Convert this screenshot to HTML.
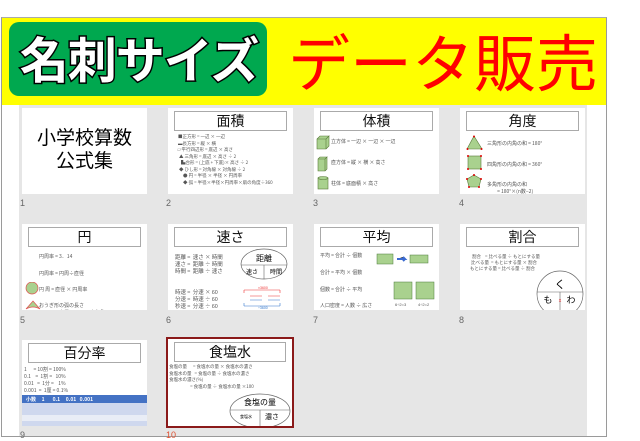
<!DOCTYPE html>
<html><head><meta charset="utf-8">
<style>
*{margin:0;padding:0;box-sizing:border-box}
body{width:640px;height:441px;background:#fff;position:relative;overflow:hidden;font-family:"Liberation Sans","Noto Sans CJK JP",sans-serif}
.abs{position:absolute}
#frame{left:1px;top:17px;width:606px;height:420px;border:1px solid #9a9a9a;border-top:1px solid #aaa}
#yellow{left:2px;top:18px;width:604px;height:87px;background:#ffff00}
#green{left:9px;top:22px;width:258px;height:74px;background:#00a84f;border-radius:10px}
#g1{left:14px;top:25px;width:250px;text-align:center;font-size:49px;font-weight:bold;color:#fff;-webkit-text-stroke:3px #000;paint-order:stroke fill;font-family:"Noto Sans CJK JP",sans-serif;letter-spacing:-1px;line-height:66px}
#r1{left:278px;top:16px;width:330px;text-align:center;font-size:62px;color:#ff0000;line-height:86px;font-family:"Noto Sans CJK JP",sans-serif;letter-spacing:0px}
#gray{left:19px;top:105px;width:568px;height:331px;background:#e6e6e6}
.card{position:absolute;width:125px;height:86px;background:#fff;overflow:hidden}
.t{position:absolute;left:6px;top:3px;width:113px;height:20px;border:1px solid #aaa;text-align:center;font-size:14px;line-height:18px;color:#111;font-family:"Noto Sans CJK JP",sans-serif}
.s{position:absolute;font-size:5px;color:#555;white-space:pre;line-height:7px;font-family:"Noto Sans CJK JP",sans-serif}
.n{position:absolute;font-size:9px;color:#666}
</style></head><body>
<div class="abs" id="frame"></div>
<div class="abs" id="yellow"></div>
<div class="abs" id="green"></div>
<div class="abs" id="g1">名刺サイズ</div>
<div class="abs" id="r1">データ販売</div>
<div class="abs" id="gray"></div>

<div class="card" style="left:22px;top:108px">
 <div class="abs" style="left:0;top:17px;width:125px;text-align:center;font-size:19px;line-height:23px;color:#000;font-family:'Noto Sans CJK JP',sans-serif">小学校算数<br>公式集</div>
</div>
<div class="card" style="left:168px;top:108px">
 <div class="t">面積</div>
 <div class="s" style="left:8px;top:26px;font-size:4.5px;line-height:6.5px">  ■正方形 = 一辺 × 一辺
  ▬長方形 = 縦 × 横
 ▱平行四辺形 = 底辺 × 高さ
   ▲ 三角形 = 底辺 × 高さ ÷ 2
     ▙台形 = (上底 + 下底)× 高さ ÷ 2
   ◆ ひし形 = 対角線 × 対角線 ÷ 2
       ● 円 = 半径 × 半径 × 円周率
       ◆ 弧 = 半径×半径×円周率×扇の角度÷360</div>
</div>
<div class="card" style="left:314px;top:108px">
 <div class="t">体積</div>
 <svg class="abs" style="left:2px;top:27px" width="14" height="56"><g fill="#a9d18e" stroke="#5a7a3a" stroke-width=".6"><path d="M1 4h9v10H1zM1 4l3-3h9l-3 3M10 4l3-3v10l-3 3"/><path d="M2 24h7v12H2zM2 24l2-2h7l-2 2M9 24l2-2v12l-2 2"/><rect x="2" y="43" width="10" height="11"/><ellipse cx="7" cy="43" rx="5" ry="1.5"/></g></svg>
 <div class="s" style="left:17px;top:30px">立方体 = 一辺 × 一辺 × 一辺</div>
 <div class="s" style="left:17px;top:51px">直方体 = 縦 × 横 × 高さ</div>
 <div class="s" style="left:17px;top:72px">柱体 = 底面積 × 高さ</div>
</div>
<div class="card" style="left:460px;top:108px">
 <div class="t">角度</div>
 <svg class="abs" style="left:6px;top:27px" width="18" height="58"><g fill="#a9d18e" stroke="#5a7a3a" stroke-width=".6"><path d="M8 1L16 14H1z"/><rect x="2" y="21" width="13" height="13"/><path d="M8 40l7 4-2 8H3l-2-8z"/></g><g fill="#d00"><circle cx="8" cy="1.5" r="1"/><circle cx="1.5" cy="14" r="1"/><circle cx="15.5" cy="14" r="1"/><circle cx="2" cy="21" r="1"/><circle cx="15" cy="21" r="1"/><circle cx="2" cy="34" r="1"/><circle cx="15" cy="34" r="1"/><circle cx="8" cy="40" r="1"/><circle cx="15" cy="44" r="1"/><circle cx="1" cy="44" r="1"/><circle cx="3" cy="52" r="1"/><circle cx="13" cy="52" r="1"/></g></svg>
 <div class="s" style="left:27px;top:32px">三角形の内角の和 = 180°</div>
 <div class="s" style="left:27px;top:53px">四角形の内角の和 = 360°</div>
 <div class="s" style="left:27px;top:73px">多角形の内角の和
         = 180°×(n数−2)</div>
</div>
<div class="n" style="left:20px;top:198px">1</div>
<div class="n" style="left:166px;top:198px">2</div>
<div class="n" style="left:313px;top:198px">3</div>
<div class="n" style="left:459px;top:198px">4</div>

<div class="card" style="left:22px;top:224px">
 <div class="t">円</div>
 <div class="s" style="left:17px;top:29px">円周率 = 3．14</div>
 <div class="s" style="left:17px;top:46px">円周率 = 円周÷直径</div>
 <svg class="abs" style="left:3px;top:58px" width="16" height="30"><ellipse cx="7" cy="6" rx="6" ry="6" fill="#a9d18e" stroke="#e05050" stroke-width=".7"/><path d="M1 27L8 19 15 27Q8 23 1 27z" fill="#a9d18e" stroke="#e05050" stroke-width=".7"/></svg>
 <div class="s" style="left:17px;top:62px">円 周 = 直径 × 円周率</div>
 <div class="s" style="left:17px;top:78px">おうぎ形の弧の長さ</div>
 <div class="s" style="left:33px;top:85px">= 直径 ×3.14×中心角÷ 360</div>
</div>
<div class="card" style="left:168px;top:224px">
 <div class="t">速さ</div>
 <div class="s" style="left:7px;top:30px;font-size:5.5px">距離 =  速さ × 時間
速さ =  距離 ÷ 時間
時間 =  距離 ÷ 速さ


時速 =  分速 × 60
分速 =  時速 ÷ 60
秒速 =  分速 ÷ 60</div>
 <svg class="abs" style="left:72px;top:24px" width="52" height="62"><ellipse cx="24" cy="16" rx="23" ry="15" fill="#fff" stroke="#666" stroke-width=".7"/><line x1="1" y1="17" x2="47" y2="17" stroke="#666" stroke-width=".6"/><line x1="24" y1="17" x2="24" y2="31" stroke="#666" stroke-width=".6"/><text x="24" y="13" font-size="8" text-anchor="middle" font-family="Noto Sans CJK JP">距離</text><text x="12" y="26" font-size="6" text-anchor="middle" font-family="Noto Sans CJK JP">速さ</text><text x="36" y="26" font-size="6" text-anchor="middle" font-family="Noto Sans CJK JP">時間</text><g stroke="#e33" fill="none" stroke-width=".6"><path d="M4 42h36M4 42v3M40 42v3M10 48h12M28 48h12"/></g><g stroke="#37c" fill="none" stroke-width=".6"><path d="M4 58h36M4 58v-3M40 58v-3M10 52h12M28 52h12"/></g><g font-size="3.5" font-family="Liberation Sans"><text x="18" y="41" fill="#e33">×3600</text><text x="18" y="61" fill="#37c">÷3600</text></g></svg>
</div>
<div class="card" style="left:314px;top:224px">
 <div class="t">平均</div>
 <div class="s" style="left:6px;top:28px">平均 = 合計 ÷ 個数</div>
 <div class="s" style="left:6px;top:45px">合計 = 平均 × 個数</div>
 <div class="s" style="left:6px;top:62px">個数 = 合計 ÷ 平均</div>
 <div class="s" style="left:6px;top:78px">人口密度 = 人数 ÷ 広さ</div>
 <svg class="abs" style="left:62px;top:24px" width="62" height="62"><g fill="#a9d18e" stroke="#4a7a3a" stroke-width=".5"><rect x="1" y="6" width="16" height="10"/><rect x="34" y="7" width="18" height="8"/><rect x="18" y="34" width="18" height="17"/><rect x="40" y="34" width="18" height="17"/></g><path d="M21 11h8l-2-2M29 11l-2 2" stroke="#3a6ad0" stroke-width="2"/><g font-size="4" fill="#555" font-family="Liberation Sans"><text x="19" y="58">6÷2=3</text><text x="42" y="58">4÷2=2</text></g></svg>
</div>
<div class="card" style="left:460px;top:224px">
 <div class="t">割合</div>
 <div class="s" style="left:10px;top:30px;font-size:4.5px;line-height:6px">  割合    = 比べる量 ÷ もとにする量
 比べる量  = もとにする量 × 割合
もとにする量 = 比べる量 ÷ 割合</div>
 <svg class="abs" style="left:76px;top:46px" width="48" height="40"><circle cx="24" cy="24" r="23" fill="#fff" stroke="#666" stroke-width=".7"/><line x1="1" y1="22" x2="47" y2="22" stroke="#666" stroke-width=".6"/><line x1="24" y1="22" x2="24" y2="47" stroke="#666" stroke-width=".6"/><text x="24" y="18" font-size="11" text-anchor="middle" font-family="Noto Sans CJK JP">く</text><text x="12" y="33" font-size="9" text-anchor="middle" font-family="Noto Sans CJK JP">も</text><text x="35" y="33" font-size="9" text-anchor="middle" font-family="Noto Sans CJK JP">わ</text><text x="24" y="32" font-size="5" fill="#e33" text-anchor="middle">x</text></svg>
</div>
<div class="n" style="left:20px;top:315px">5</div>
<div class="n" style="left:166px;top:315px">6</div>
<div class="n" style="left:313px;top:315px">7</div>
<div class="n" style="left:459px;top:315px">8</div>

<div class="card" style="left:22px;top:340px">
 <div class="t">百分率</div>
 <div class="s" style="left:2px;top:26px;font-size:5px;line-height:7px">1      = 10割 = 100%
0.1    =  1割 =   10%
0.01   =  1分 =    1%
0.001  =  1厘 = 0.1%</div>
 <div class="abs" style="left:0;top:55px;width:125px;height:8px;background:#4472c4"></div>
 <div class="abs" style="left:0;top:63px;width:125px;height:12px;background:#cfd8ee"></div>
 <div class="abs" style="left:0;top:75px;width:125px;height:6px;background:#e9edf6"></div>
 <div class="abs" style="left:0;top:81px;width:125px;height:6px;background:#cfd8ee"></div>
 <div class="s" style="left:4px;top:56px;color:#fff;font-weight:bold">小数     1       0.1     0.01   0.001</div>
</div>
<div class="card" style="left:166px;top:337px;width:128px;height:91px;border:2px solid #8b1a1a">
 <div class="t" style="left:6px;top:3px;width:112px;height:20px">食塩水</div>
 <div class="s" style="left:1px;top:25px;font-size:4.5px;line-height:6.5px">食塩の量      = 食塩水の量 × 食塩水の濃さ
食塩水の量   = 食塩の量 ÷ 食塩水の濃さ
食塩水の濃さ(%)
                     = 食塩の量 ÷ 食塩水の量 ×100</div>
 <svg class="abs" style="left:58px;top:52px" width="66" height="36"><ellipse cx="34" cy="20" rx="30" ry="17" fill="#fff" stroke="#666" stroke-width=".7"/><line x1="4" y1="19" x2="64" y2="19" stroke="#666" stroke-width=".6"/><line x1="34" y1="19" x2="34" y2="37" stroke="#666" stroke-width=".6"/><text x="34" y="14" font-size="8" text-anchor="middle" font-family="Noto Sans CJK JP">食塩の量</text><text x="20" y="27" font-size="4" text-anchor="middle" font-family="Noto Sans CJK JP">食塩水</text><text x="46" y="28" font-size="7" text-anchor="middle" font-family="Noto Sans CJK JP">濃さ</text></svg>
</div>
<div class="n" style="left:20px;top:430px">9</div>
<div class="n" style="left:166px;top:430px;color:#e05030">10</div>
</body></html>
